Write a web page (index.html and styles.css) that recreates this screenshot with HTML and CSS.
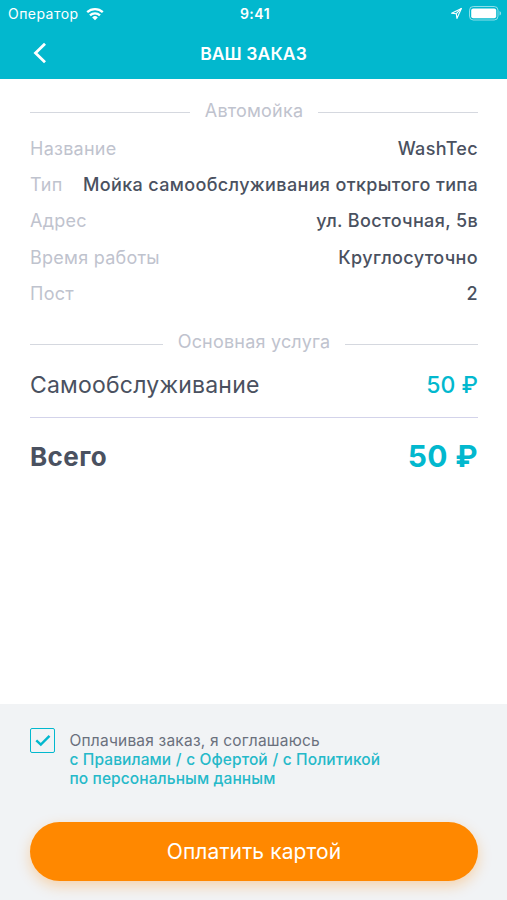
FILE: index.html
```html
<!DOCTYPE html>
<html lang="ru">
<head>
  <meta charset="UTF-8" />
  <title>Ваш заказ</title>
  <meta name="viewport" content="width=device-width, initial-scale=1.0" />
  <link rel="stylesheet" href="styles.css">
</head>
<body>
  <header class="header">
    <div class="status-bar">
      <div class="carrier">
        <span class="carrier-name">Оператор</span>
        <svg class="wifi" width="18" height="14" viewBox="0 0 18 14" fill="none" stroke="#fff" stroke-width="2.3">
          <path d="M1.2 5.2a11.2 11.2 0 0 1 15.6 0" />
          <path d="M4 8.3a7.2 7.2 0 0 1 10 0" />
          <path d="M9 13.2 6.2 10.4a4.1 4.1 0 0 1 5.6 0z" fill="#fff" stroke="none" />
        </svg>
      </div>
      <span class="time">9:41</span>
      <div class="indicators">
        <svg width="13" height="13" viewBox="0 0 13 13" fill="none" stroke="#fff" stroke-width="1.1" stroke-linejoin="round">
          <path d="M11.4 1.4 1.6 6.2l4.7.5.6 4.7z" />
          <path d="M11.4 1.4 6.3 6.7" />
        </svg>
        <svg width="33" height="15" viewBox="0 0 33 15">
          <rect x="0.5" y="0.5" width="28.5" height="13.5" rx="3.8" fill="none" stroke="#fff" stroke-opacity="0.55" />
          <rect x="2.2" y="2.4" width="25" height="9.8" rx="2" fill="#fff" />
          <path d="M30.5 5v4.6c1-.4 1.6-1.3 1.6-2.3s-.6-1.9-1.6-2.3z" fill="#fff" fill-opacity="0.55" />
        </svg>
      </div>
    </div>
    <div class="nav-bar">
      <a class="back" href="#" aria-label="Назад">
        <svg width="14" height="22" viewBox="0 0 14 22" fill="none" stroke="#fff" stroke-width="2.8">
          <path d="M12 1.7 2.5 11l9.5 9.3" />
        </svg>
      </a>
      <h1>ВАШ ЗАКАЗ</h1>
    </div>
  </header>

  <main class="order">
    <h2 class="divider">Автомойка</h2>
    <dl class="details">
      <div class="row"><dt>Название</dt><dd>WashTec</dd></div>
      <div class="row"><dt>Тип</dt><dd>Мойка самообслуживания открытого типа</dd></div>
      <div class="row"><dt>Адрес</dt><dd>ул. Восточная, 5в</dd></div>
      <div class="row"><dt>Время работы</dt><dd>Круглосуточно</dd></div>
      <div class="row"><dt>Пост</dt><dd>2</dd></div>
    </dl>

    <h2 class="divider divider-service">Основная услуга</h2>
    <div class="service">
      <span>Самообслуживание</span>
      <span class="price">50 ₽</span>
    </div>
    <div class="total">
      <span class="total-label">Всего</span>
      <span class="total-price">50 ₽</span>
    </div>
  </main>

  <footer class="footer">
    <div class="agreement">
      <span class="checkbox" role="checkbox" aria-checked="true">
        <svg width="16" height="13" viewBox="0 0 16 13" fill="none" stroke="#02b8ce" stroke-width="2.4">
          <path d="M1.3 6.3 5.8 10.6 14.5 1.8" />
        </svg>
      </span>
      <p>
        Оплачивая заказ, я соглашаюсь<br>
        <a href="#">с Правилами</a> <i>/</i> <a href="#">с Офертой</a> <i>/</i> <a href="#">с Политикой<br>
        по персональным данным</a>
      </p>
    </div>
    <button class="pay-btn" type="button">Оплатить картой</button>
  </footer>
</body>
</html>
```
FILE: styles.css
```css
* {
  box-sizing: border-box;
}

body {
  font-family: Inter, 'Liberation Sans', sans-serif;
  background-color: #fff;
  color: #4a5160;
  margin: 0;
  height: 900px;
  display: flex;
  flex-direction: column;
}

.header {
  height: 79px;
  background: #02b8ce;
  color: #fff;
}

.status-bar {
  display: grid;
  grid-template-columns: 1fr auto 1fr;
  align-items: center;
  height: 27px;
  padding: 0 5px 0 8px;
  font-size: 14px;
}

.carrier {
  display: flex;
  align-items: center;
  gap: 7px;
}

.carrier-name {
  letter-spacing: 0.45px;
}

.time {
  font-weight: 600;
  letter-spacing: 0.5px;
}

.indicators {
  display: flex;
  align-items: center;
  justify-content: flex-end;
  gap: 6px;
}

.nav-bar {
  display: grid;
  grid-template-columns: 1fr auto 1fr;
  align-items: center;
  height: 52px;
  padding: 0 33px;
}

.back {
  display: flex;
}

h1 {
  margin: 0;
  font-size: 17.5px;
  font-weight: 600;
  letter-spacing: 0.1px;
}

.order {
  flex: 1;
  padding: 20px 29px 0 30px;
}

.divider {
  display: flex;
  align-items: center;
  gap: 15px;
  margin: 0;
  height: 22px;
  font-size: 18px;
  font-weight: 400;
  letter-spacing: 0.2px;
  color: #bfc3ce;
}

.divider::before,
.divider::after {
  content: '';
  flex: 1;
  height: 1px;
  margin-top: 5px;
  background: #d5d8df;
}

.details {
  margin: 9px 0 0;
}

.row {
  display: flex;
  justify-content: space-between;
  align-items: center;
  height: 36.4px;
  font-size: 18px;
  white-space: nowrap;
}

.row dt {
  letter-spacing: 0.25px;
  color: #bfc3ce;
}

.row dd {
  margin: 0;
  font-weight: 500;
  letter-spacing: 0.35px;
}

.divider-service {
  margin-top: 19px;
}

.service {
  display: flex;
  justify-content: space-between;
  align-items: center;
  height: 65px;
  border-bottom: 1px solid #d3d3ea;
  font-size: 23px;
  letter-spacing: 0.2px;
}

.price {
  font-weight: 500;
  letter-spacing: 0;
  color: #02b8ce;
}

.total {
  display: flex;
  justify-content: space-between;
  align-items: center;
  height: 77px;
  font-weight: 700;
}

.total-label {
  font-size: 26px;
  letter-spacing: 0.4px;
}

.total-price {
  font-size: 30px;
  letter-spacing: 0.4px;
  color: #02b8ce;
}

.footer {
  height: 196px;
  padding: 24px 29px 0 30px;
  background: #f1f3f5;
}

.agreement {
  display: flex;
  gap: 14.5px;
  height: 94px;
}

.checkbox {
  display: flex;
  align-items: center;
  justify-content: center;
  width: 25px;
  height: 25px;
  border: 1.5px solid #02b8ce;
  border-radius: 2px;
}

.agreement p {
  margin: 3px 0 0;
  font-size: 15.5px;
  line-height: 19px;
  letter-spacing: 0.2px;
  color: #6a707d;
}

.agreement a,
.agreement i {
  color: #25b9c9;
  font-style: normal;
  font-weight: 500;
  letter-spacing: 0.1px;
  text-decoration: none;
}

.pay-btn {
  display: block;
  width: 100%;
  height: 59px;
  border: none;
  border-radius: 30px;
  background: #ff8800;
  color: #fff;
  font-family: inherit;
  font-size: 21px;
  letter-spacing: 0.1px;
  box-shadow: 0 5px 14px rgba(255, 136, 0, 0.3);
  cursor: pointer;
}
```
